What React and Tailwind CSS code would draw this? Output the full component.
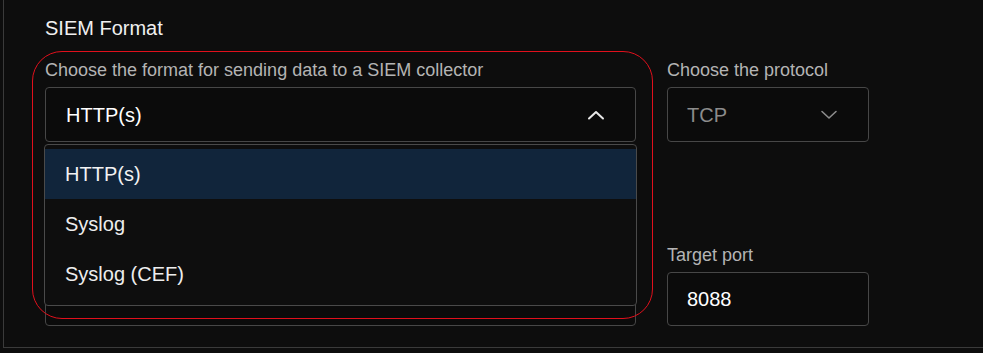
import React from "react";

const font = { fontFamily: '"Liberation Sans", Arial, sans-serif' };

const ChevronUp = ({ className }) => (
  <svg width="18" height="10" viewBox="0 0 18 10" fill="none" className={className}>
    <polyline points="2,8.5 9,2 16,8.5" stroke="currentColor" strokeWidth="2" strokeLinecap="round" strokeLinejoin="round" />
  </svg>
);

const ChevronDown = ({ className }) => (
  <svg width="18" height="10" viewBox="0 0 18 10" fill="none" className={className}>
    <polyline points="2,1.5 9,8 16,1.5" stroke="currentColor" strokeWidth="1.6" strokeLinecap="round" strokeLinejoin="round" />
  </svg>
);

const options = ["HTTP(s)", "Syslog", "Syslog (CEF)"];

export default function App() {
  return (
    <div className="w-[983px] h-[353px] bg-[#0d0d0d] overflow-hidden" style={font}>
      <div className="relative ml-[3px] h-[348px] border-l border-b border-[#3a3a3a] pl-[41px] pt-[16px]">
        {/* Heading */}
        <h2 className="text-[20px] leading-[24px] text-[#f0f0f0]">SIEM Format</h2>

        <div className="mt-[21px] grid grid-cols-[591px_202px] gap-x-[31px] gap-y-[104px]">
          {/* Format select */}
          <div className="relative">
            <label className="block text-[18px] leading-[18px] text-[#b4b4b4]">
              Choose the format for sending data to a SIEM collector
            </label>
            <div className="mt-[8px] h-[55px] flex items-center justify-between rounded-[4px] border border-[#474747] bg-[#0b0b0b] pl-[20px] pr-[30px]">
              <span className="text-[20px] text-white">HTTP(s)</span>
              <ChevronUp className="text-[#e8e8e8]" />
            </div>

            {/* Open menu */}
            <div className="absolute z-10 left-[-1px] right-[-1px] top-[83px] h-[162px] rounded-[4px] border border-[#4a4a4a] bg-[#0e0e0e] pt-[4px]">
              {options.map((o, i) => (
                <div
                  key={o}
                  className={`h-[50px] flex items-center pl-[20px] text-[20px] ${
                    i === 0 ? "bg-[#11253b] text-[#f2f2f2]" : "text-[#ededed]"
                  }`}
                >
                  {o}
                </div>
              ))}
            </div>
          </div>

          {/* Protocol select */}
          <div>
            <label className="block text-[18px] leading-[18px] text-[#b4b4b4]">Choose the protocol</label>
            <div className="mt-[8px] h-[55px] flex items-center justify-between rounded-[4px] border border-[#474747] bg-[#0b0b0b] pl-[19px] pr-[30px]">
              <span className="text-[20px] text-[#8c8c8c]">TCP</span>
              <ChevronDown className="text-[#8c8c8c]" />
            </div>
          </div>

          {/* Target URL (under the menu) */}
          <div>
            <label className="block text-[18px] leading-[18px] text-[#b4b4b4]">Target URL</label>
            <div className="mt-[8px] h-[54px] flex items-center rounded-[4px] border border-[#474747] bg-[#0b0b0b] pl-[20px] pb-[5px]">
              <span className="text-[16px] leading-[16px] text-[#d8d8d8]">https://my.splunkcloud.com/services/collector</span>
            </div>
          </div>

          {/* Target port */}
          <div>
            <label className="block text-[18px] leading-[18px] text-[#b4b4b4]">Target port</label>
            <div className="mt-[8px] h-[54px] flex items-center rounded-[4px] border border-[#474747] bg-[#0b0b0b] pl-[19px]">
              <span className="text-[20px] text-white">8088</span>
            </div>
          </div>
        </div>

        {/* Red annotation outline */}
        <div className="pointer-events-none absolute z-20 left-[28px] top-[51px] w-[621px] h-[268px] rounded-[30px] border border-[#e0101c]" />
      </div>
    </div>
  );
}
